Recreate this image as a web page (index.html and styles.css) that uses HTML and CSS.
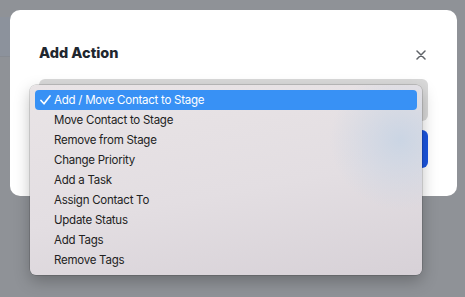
FILE: index.html
```html
<!DOCTYPE html>
<html lang="en">
<head>
    <meta charset="UTF-8">
    <title>Add Action</title>
    <link rel="stylesheet" href="styles.css">
</head>
<body>
    <div class="backdrop-page"></div>

    <div class="modal">
        <div class="modal-header">
            <h2>Add Action</h2>
            <span class="close">
                <svg width="10" height="10" viewBox="0 0 10 10"><path d="M1 1L9 9M9 1L1 9" stroke="#5f6368" stroke-width="1.5" stroke-linecap="round"/></svg>
            </span>
        </div>
        <div class="select-field"></div>
        <div class="actions">
            <button class="btn">Add</button>
        </div>
    </div>

    <!-- native select popup -->
    <ul class="dropdown">
        <li class="selected">
            <svg class="check" width="11" height="10" viewBox="0 0 11 10"><path d="M1 5.5L4 8.8L10 1" fill="none" stroke="#fff" stroke-width="1.7" stroke-linecap="round" stroke-linejoin="round"/></svg>
            Add / Move Contact to Stage
        </li>
        <li>Move Contact to Stage</li>
        <li>Remove from Stage</li>
        <li>Change Priority</li>
        <li>Add a Task</li>
        <li>Assign Contact To</li>
        <li>Update Status</li>
        <li>Add Tags</li>
        <li>Remove Tags</li>
    </ul>
</body>
</html>
```

FILE: styles.css
```css
* {
    margin: 0;
    padding: 0;
    box-sizing: border-box;
}

body {
    width: 465px;
    height: 297px;
    overflow: hidden;
    background: #8f9297;
    font-family: "Inter", "Liberation Sans", sans-serif;
    position: relative;
}

.backdrop-page {
    position: absolute;
    left: 0;
    top: 17px;
    width: 50px;
    height: 40px;
    background: #8c929c;
    border-right: 1px solid #868a90;
    border-bottom: 1px solid #878b92;
}

.modal {
    position: absolute;
    left: 10px;
    top: 10px;
    width: 447px;
    height: 186px;
    background: #fff;
    border-radius: 10px;
    padding: 33px 29px 28px 29px;
    display: flex;
    flex-direction: column;
}

.modal-header {
    display: flex;
    justify-content: space-between;
    align-items: center;
    height: 20px;
    margin-bottom: 16px;
}

.modal-header h2 {
    font-size: 14.5px;
    font-weight: 800;
    color: #1f272f;
    line-height: 20px;
}

.close {
    display: flex;
    margin-right: 2px;
    margin-top: 3px;
}

.select-field {
    height: 42px;
    width: 389px;
    background: #d9d9d9;
    border-radius: 6px;
}

.actions {
    display: flex;
    justify-content: flex-end;
    margin-top: 9px;
}

.btn {
    width: 96px;
    height: 38px;
    border: none;
    border-radius: 6px;
    background: #1b55e0;
    color: #fff;
    font-size: 14px;
    font-weight: 600;
}

.dropdown {
    position: absolute;
    left: 30px;
    top: 85px;
    width: 392px;
    height: 190px;
    padding: 5px;
    list-style: none;
    border-radius: 6px;
    background:
        radial-gradient(circle at 370px 55px, rgba(200, 212, 228, 0.9), rgba(200, 212, 228, 0) 70px),
        linear-gradient(170deg, #e9e4e6 0%, #e3dee2 55%, #d7d1d7 100%);
    box-shadow: 0 0 0 0.5px rgba(0, 0, 0, 0.25), 0 6px 16px rgba(0, 0, 0, 0.25);
    font-size: 11.5px;
    letter-spacing: -0.25px;
    color: #222;
}

.dropdown li {
    height: 20px;
    line-height: 20px;
    padding-left: 19px;
    border-radius: 4px;
    position: relative;
}

.dropdown li.selected {
    background: #3891f5;
    color: #fff;
}

.check {
    position: absolute;
    left: 5px;
    top: 5px;
}
```
